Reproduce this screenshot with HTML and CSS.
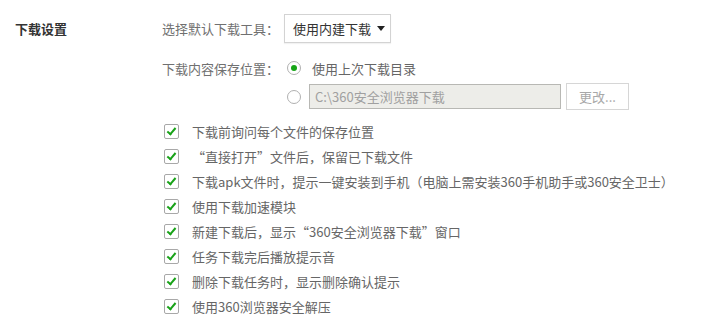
FILE: index.html
```html
<!DOCTYPE html>
<html>
<head>
<meta charset="utf-8">
<title>下载设置</title>
<link rel="stylesheet" href="styles.css">
</head>
<body>
<div class="section">
    <div class="section-title">下载设置</div>
    <div class="section-body">
        <div class="row row-tool">
            <span class="row-label">选择默认下载工具：</span>
            <div class="dropdown">使用内建下载 <span class="caret"></span></div>
        </div>
        <div class="row row-dir">
            <span class="row-label">下载内容保存位置：</span>
            <span class="radio checked"></span>
            <span class="radio-text">使用上次下载目录</span>
        </div>
        <div class="row row-path">
            <span class="radio"></span>
            <div class="path-input">C:\360安全浏览器下载</div>
            <div class="btn">更改...</div>
        </div>
        <ul class="checklist">
            <li><span class="check"></span>下载前询问每个文件的保存位置</li>
            <li><span class="check"></span>“直接打开”文件后，保留已下载文件</li>
            <li><span class="check"></span>下载apk文件时，提示一键安装到手机（电脑上需安装360手机助手或360安全卫士）</li>
            <li><span class="check"></span>使用下载加速模块</li>
            <li><span class="check"></span>新建下载后，显示“360安全浏览器下载”窗口</li>
            <li><span class="check"></span>任务下载完后播放提示音</li>
            <li><span class="check"></span>删除下载任务时，显示删除确认提示</li>
            <li><span class="check"></span>使用360浏览器安全解压</li>
        </ul>
    </div>
</div>
</body>
</html>
```

FILE: styles.css
```css
body {
    margin: 0;
    background: #fff;
    font-family: "Noto Sans CJK SC", "Liberation Sans", sans-serif;
    font-size: 13px;
    color: #707070;
}
.section {
    display: flex;
    padding: 14px 0 0 15px;
}
.section-title {
    width: 147px;
    height: 29px;
    line-height: 29px;
    font-weight: bold;
    color: #333;
}
.section-body {
    flex: 1;
}
.row {
    display: flex;
    align-items: center;
}
.row-label {
    width: 122px;
    white-space: nowrap;
}
.row-tool {
    height: 29px;
}
.dropdown {
    box-sizing: border-box;
    height: 29px;
    width: 107px;
    padding: 0 0 0 8px;
    border: 1px solid #d3d3d3;
    background: #fff;
    color: #333;
    display: flex;
    align-items: center;
    box-shadow: 0 1px 1px rgba(0,0,0,.05);
}
.caret {
    display: inline-block;
    margin-left: 6px;
    border-left: 4px solid transparent;
    border-right: 4px solid transparent;
    border-top: 5px solid #222;
}
.row-dir {
    margin-top: 13px;
    height: 24px;
}
.radio {
    box-sizing: border-box;
    width: 14px;
    height: 14px;
    border: 1px solid #b0b0b0;
    border-radius: 50%;
    background: #fff;
    display: flex;
    align-items: center;
    justify-content: center;
}
.radio.checked::after {
    content: "";
    width: 6px;
    height: 6px;
    border-radius: 50%;
    background: #16a516;
}
.row-dir .radio {
    margin-left: 3px;
}
.radio-text {
    margin-left: 11px;
    color: #666;
}
.row-path {
    margin-top: 3px;
    height: 27px;
    padding-left: 125px;
}
.path-input {
    box-sizing: border-box;
    width: 252px;
    height: 25px;
    margin-left: 8px;
    padding-left: 5px;
    line-height: 23px;
    border: 1px solid #b8b8b4;
    background: #edede9;
    color: #a0a0a0;
}
.btn {
    box-sizing: border-box;
    width: 63px;
    height: 27px;
    margin-left: 5px;
    line-height: 25px;
    text-align: center;
    border: 1px solid #d6d6d6;
    background: #fff;
    color: #a8a8a8;
}
.checklist {
    list-style: none;
    margin: 9px 0 0;
    padding: 0;
}
.checklist li {
    display: flex;
    align-items: center;
    height: 25px;
    color: #666;
    white-space: nowrap;
}
.check {
    box-sizing: border-box;
    width: 15px;
    height: 15px;
    margin: 0 13px 0 2px;
    border: 1px solid #a8a8a8;
    border-radius: 2px;
    background: #fff;
    position: relative;
}
.check::after {
    content: "";
    position: absolute;
    left: 4px;
    top: 1px;
    width: 3px;
    height: 7px;
    border: solid #18a218;
    border-width: 0 2.5px 2.5px 0;
    transform: rotate(40deg);
}
```
